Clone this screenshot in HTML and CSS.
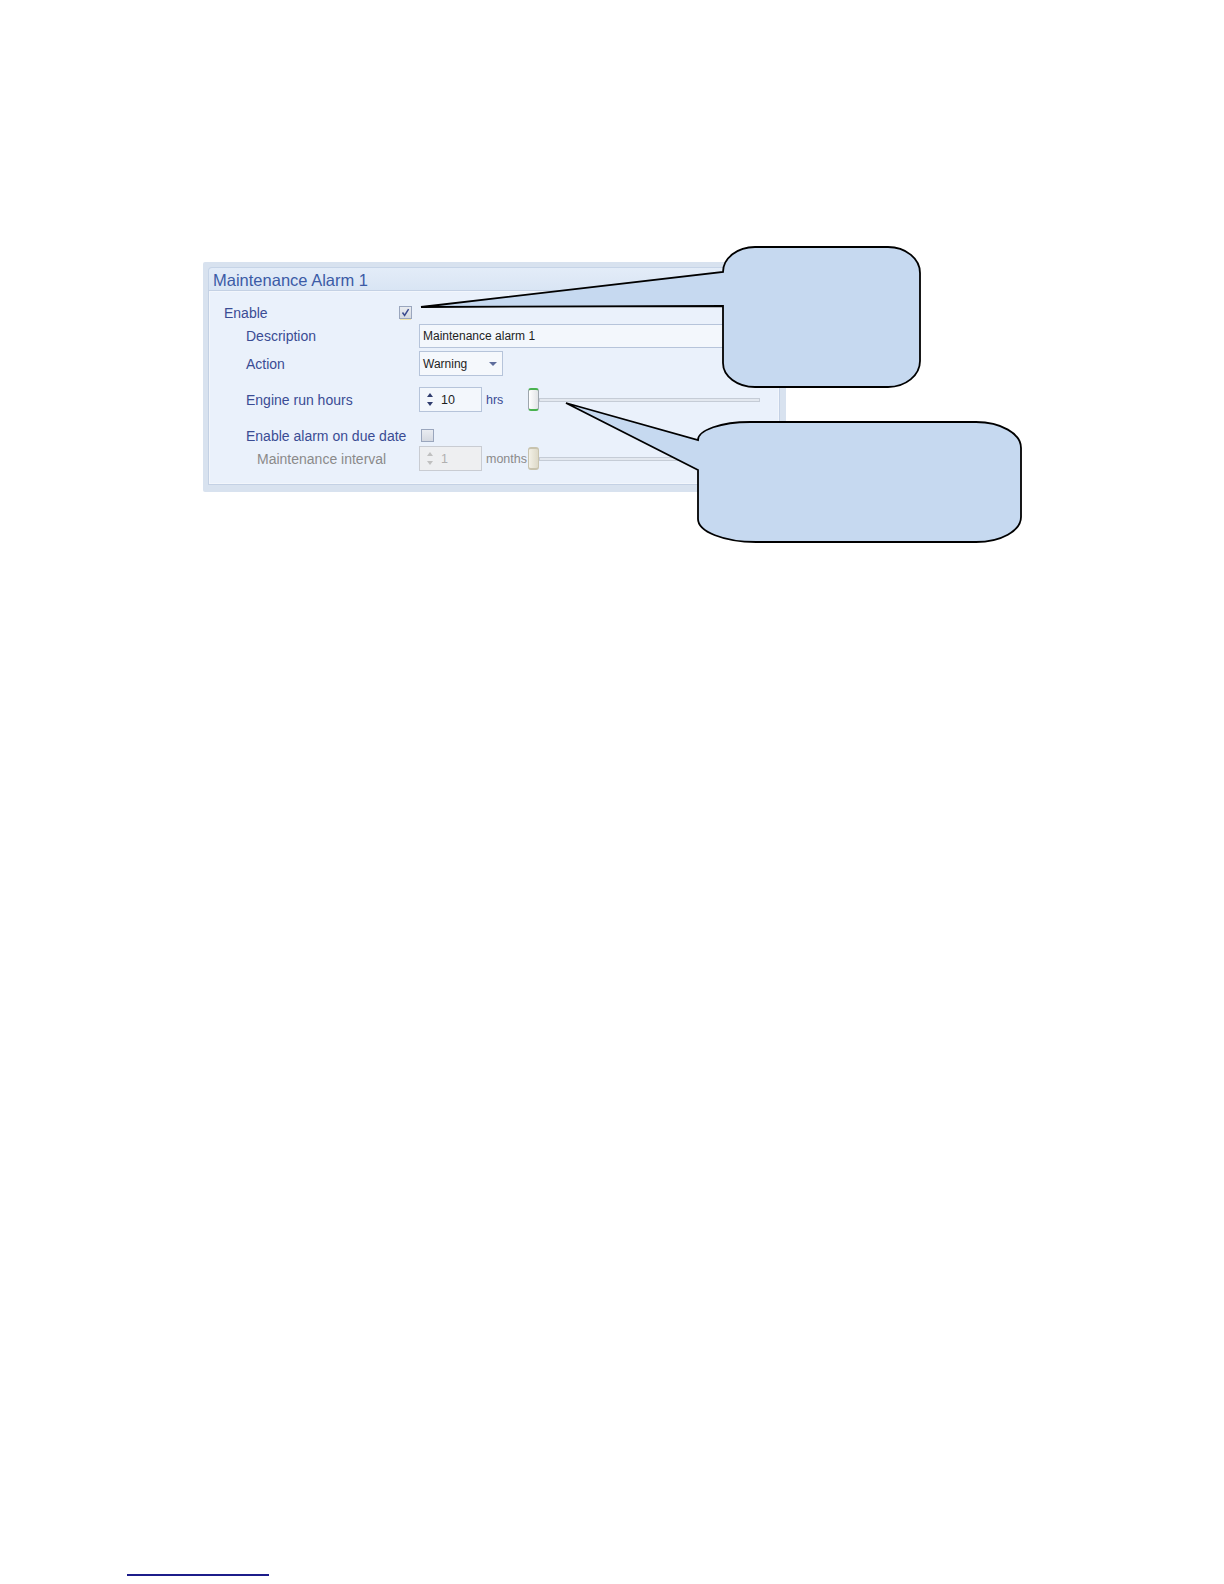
FILE: index.html
```html
<!DOCTYPE html>
<html>
<head>
<meta charset="utf-8">
<title>Maintenance Alarm 1</title>
<link rel="stylesheet" href="styles.css">
</head>
<body>
<div class="page">
  <div class="frame">
    <div class="header">Maintenance Alarm 1</div>
    <div class="box">
      <div class="row lv1 h19">
        <span class="label w175">Enable</span>
        <span class="check focus">
          <svg width="11" height="11" viewBox="0 0 11 11"><path d="M2.5 5.5 L4.6 8.4 L8.6 2.2" fill="none" stroke="#3b4a8e" stroke-width="1.5"/></svg>
        </span>
      </div>
      <div class="row lv2 mt2">
        <span class="label w173">Description</span>
        <span class="input text-input">Maintenance alarm 1</span>
      </div>
      <div class="row lv2 mt3">
        <span class="label w173">Action</span>
        <span class="input select">Warning<span class="caret"></span></span>
      </div>
      <div class="row lv2 mt11">
        <span class="label w173">Engine run hours</span>
        <span class="input spin">
          <span class="arrows"><span class="up"></span><span class="down"></span></span>
          <span class="val">10</span>
        </span>
        <span class="unit">hrs</span>
        <span class="slider">
          <span class="thumb"></span>
          <span class="track"></span>
        </span>
      </div>
      <div class="row lv2 mt14 h19">
        <span class="label w175">Enable alarm on due date</span>
        <span class="check"></span>
      </div>
      <div class="row lv3 mt1 disabled">
        <span class="label w162">Maintenance interval</span>
        <span class="input spin off">
          <span class="arrows"><span class="up"></span><span class="down"></span></span>
          <span class="val">1</span>
        </span>
        <span class="unit">months</span>
        <span class="slider">
          <span class="thumb off"></span>
          <span class="track"></span>
        </span>
      </div>
    </div>
  </div>

  <div class="footer-rule"></div>

  <svg class="callouts" width="1224" height="600" viewBox="0 0 1224 600">
    <path d="M 755 247 H 888 A 32 26 0 0 1 920 273 V 361 A 32 26 0 0 1 888 387 H 755 A 32 24 0 0 1 723 363 V 306 L 421 307 L 723 272 A 32 25 0 0 1 755 247 Z" fill="#c6d9f0" stroke="#000" stroke-width="1.8" stroke-linejoin="miter"/>
    <path d="M 750 422 H 976 A 45 26 0 0 1 1021 448 V 517 A 45 25 0 0 1 976 542 H 756 A 58 23 0 0 1 698 519 V 470 L 566 403 L 698 440 A 52 18 0 0 1 750 422 Z" fill="#c6d9f0" stroke="#000" stroke-width="1.8" stroke-linejoin="miter"/>
  </svg>
</div>
</body>
</html>
```

FILE: styles.css
```css
html, body {
  margin: 0;
  padding: 0;
  background: #ffffff;
}

.page {
  position: relative;
  width: 1224px;
  min-height: 1584px;
  display: flex;
  flex-direction: column;
  font-family: "Liberation Sans", Arial, sans-serif;
}

.frame {
  margin: 262px 0 0 203px;
  width: 583px;
  box-sizing: border-box;
  padding: 5px 6px 7px 5px;
  background: #d8e2ef;
  border-radius: 2px;
}

.header {
  box-sizing: border-box;
  height: 23px;
  padding: 3px 0 0 4px;
  line-height: 19px;
  font-size: 16.5px;
  color: #3b5ba6;
  background: linear-gradient(#e3ecf8, #d9e5f4);
  border: 1px solid #c6d4e7;
  border-bottom: none;
  border-radius: 4px 4px 0 0;
  white-space: nowrap;
}

.box {
  box-sizing: border-box;
  background: #eaf1fb;
  border: 1px solid #c4d1e4;
  padding: 12px 0 13px 0;
  box-shadow: inset 0 0 0 1px #f2f6fc;
}

.row {
  display: flex;
  align-items: center;
  font-size: 14px;
  color: #3a4c94;
}

.lv1 { padding-left: 15px; }
.lv2 { padding-left: 37px; }
.lv3 { padding-left: 48px; }

.h19 { height: 19px; }
.mt1 { margin-top: 1px; }
.mt2 { margin-top: 2px; }
.mt3 { margin-top: 3px; }
.mt11 { margin-top: 11px; }
.mt14 { margin-top: 14px; }

.label {
  flex: none;
  white-space: nowrap;
}
.w175 { width: 175px; }
.w173 { width: 173px; }
.w162 { width: 162px; }

.disabled { color: #8a8a8a; }

.check {
  box-sizing: border-box;
  width: 13px;
  height: 13px;
  border: 1px solid #9aa6bd;
  background: linear-gradient(#e9ecf1, #d5d9e1);
  display: flex;
  align-items: center;
  justify-content: center;
}
.check.focus {
  box-shadow: 0 2px 0 -1px #f1e3a6;
}

.input {
  box-sizing: border-box;
  border: 1px solid #b6c4da;
  background: #f3f7fc;
  font-size: 12px;
  color: #1e1e1e;
  display: flex;
  align-items: center;
}

.text-input {
  width: 353px;
  height: 24px;
  padding-left: 3px;
}

.select {
  position: relative;
  width: 84px;
  height: 25px;
  padding-left: 3px;
  background: #f5f8fc;
}
.caret {
  position: absolute;
  right: 5px;
  top: 10px;
  width: 0;
  height: 0;
  border-left: 4px solid transparent;
  border-right: 4px solid transparent;
  border-top: 4px solid #5e6d9c;
}

.spin {
  width: 63px;
  height: 25px;
  padding-left: 7px;
}
.arrows {
  display: flex;
  flex-direction: column;
  justify-content: space-between;
  height: 13px;
  width: 6px;
  margin-right: 8px;
}
.arrows .up {
  width: 0;
  height: 0;
  border-left: 3px solid transparent;
  border-right: 3px solid transparent;
  border-bottom: 4px solid #2f3d6e;
}
.arrows .down {
  width: 0;
  height: 0;
  border-left: 3px solid transparent;
  border-right: 3px solid transparent;
  border-top: 4px solid #2f3d6e;
}
.val { font-size: 12.5px; }

.spin.off {
  background: #eeeff1;
  border-color: #c9ccd2;
  color: #b0b0b0;
}
.spin.off .arrows .up { border-bottom-color: #c0c0c0; }
.spin.off .arrows .down { border-top-color: #c0c0c0; }

.unit {
  flex: none;
  width: 46px;
  padding-left: 4px;
  box-sizing: border-box;
  font-size: 12.5px;
  white-space: nowrap;
}

.slider {
  display: flex;
  align-items: center;
  width: 232px;
}
.thumb {
  box-sizing: border-box;
  flex: none;
  width: 11px;
  height: 23px;
  background: linear-gradient(90deg, #ffffff, #e2e4e6);
  border: 1px solid #9ea6ad;
  border-top: 2px solid #49b24f;
  border-bottom: 2px solid #49b24f;
  border-radius: 3px;
}
.thumb.off {
  background: linear-gradient(90deg, #f2f0e6, #ddd9c8);
  border-color: #c8c3ae;
}
.track {
  flex: 1;
  height: 4px;
  box-sizing: border-box;
  border: 1px solid #c5ccd6;
  background: #e3e8ef;
}

.footer-rule {
  margin: auto 0 8px 127px;
  width: 142px;
  height: 2px;
  background: #1c1c8a;
}

.callouts {
  position: absolute;
  left: 0;
  top: 0;
  pointer-events: none;
}
```
